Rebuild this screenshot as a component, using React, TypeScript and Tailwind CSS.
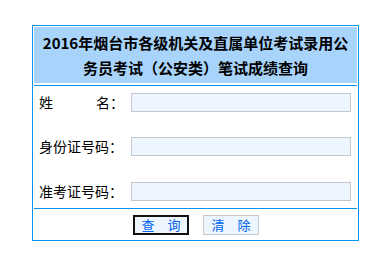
import React from "react";

export default function App() {
  const font = { fontFamily: '"Noto Sans CJK SC", "Noto Sans", sans-serif' };
  return (
    <div className="w-[387px] h-[257px] bg-white overflow-hidden" style={font}>
      <div className="ml-[32px] mt-[25px] w-[327px] border border-[#0a94ee] px-[1px] pt-[1px]">
        <div className="h-[56px] bg-[#a8d4fc] flex flex-col items-center justify-center text-[15px] leading-[25px] font-bold text-black">
          <div>2016年烟台市各级机关及直属单位考试录用公</div>
          <div>务员考试（公安类）笔试成绩查询</div>
        </div>
        <div className="mt-[2px] border-t border-[#0a94ee] pt-[7px] pb-[7px] pl-[5px] flex flex-col text-[14px] text-black">
          <div className="flex items-center h-[19px]">
            <div className="w-[92px] flex">
              <span>姓</span>
              <span className="ml-[43px]">名：</span>
            </div>
            <div className="w-[220px] h-[19px] bg-[#edf5ff] border border-[#c4c7cc]" />
          </div>
          <div className="flex items-center h-[19px] mt-[25px]">
            <div className="w-[92px]">身份证号码：</div>
            <div className="w-[220px] h-[19px] bg-[#edf5ff] border border-[#c4c7cc]" />
          </div>
          <div className="flex items-center h-[19px] mt-[26px]">
            <div className="w-[92px]">准考证号码：</div>
            <div className="w-[220px] h-[19px] bg-[#edf5ff] border border-[#c4c7cc]" />
          </div>
        </div>
        <div className="border-t border-[#0a94ee] h-[32px] flex items-center justify-center gap-[14px] pl-[1px]">
          <button className="w-[56px] h-[20px] border-2 border-[#111] bg-[#edf5ff] text-[#0062f0] text-[13px] leading-[16px] flex items-center justify-center">
            查　询
          </button>
          <button className="w-[56px] h-[20px] border border-[#c8c8c8] bg-[#edf5ff] text-[#0062f0] text-[13px] leading-[16px] flex items-center justify-center">
            清　除
          </button>
        </div>
      </div>
    </div>
  );
}
